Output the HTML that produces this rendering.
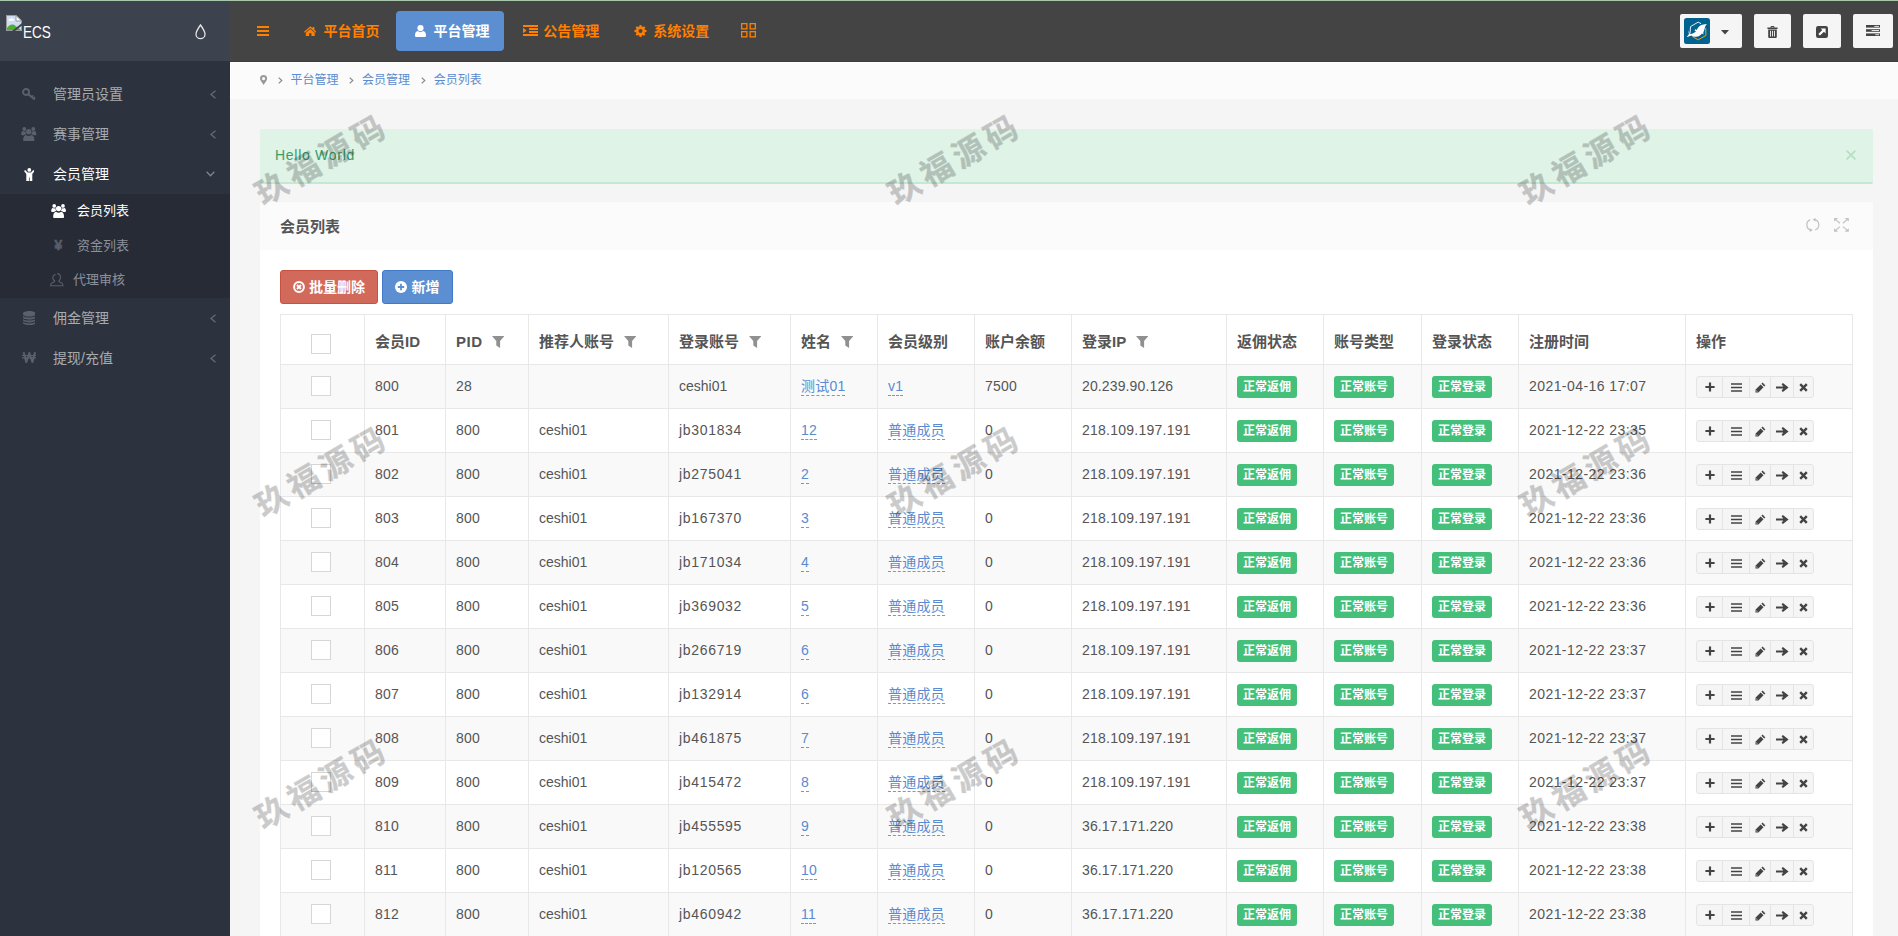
<!DOCTYPE html>
<html lang="zh-CN">
<head>
<meta charset="utf-8">
<title>会员列表</title>
<style>
*{box-sizing:border-box}
html,body{margin:0;padding:0}
body{width:1898px;height:936px;overflow:hidden;position:relative;background:#f5f5f5;color:#555;
 font-family:"Liberation Sans","Noto Sans CJK SC",sans-serif;font-size:14px;line-height:20px}
a{text-decoration:none;color:inherit}
.abs{position:absolute}
#topline{left:0;top:0;width:1898px;height:1px;background:#a9c7ab;z-index:50}
/* sidebar */
#sidebar{left:0;top:0;width:230px;height:936px;background:#2d333e}
#brand{left:0;top:0;width:230px;height:61px;background:#3d434e}
#brand .alt{left:23px;top:22px;color:#fff;font-size:16.5px;line-height:20px;transform:scaleX(.82);transform-origin:left center}
.mi{left:0;width:230px;height:40px;color:#a7abb0;font-size:14px}
.mi .t{position:absolute;left:53px;top:10px;line-height:20px;white-space:nowrap}
.mi svg.ic{position:absolute}
.mi svg.ar{position:absolute;right:15px;top:15px}
.mi.open{color:#fff}
#sub{left:0;top:194px;width:230px;height:104px;background:#262b36}
.si{left:0;width:230px;height:34px;color:#8b919a;font-size:13px}
.si .t{position:absolute;top:7px;line-height:20px;white-space:nowrap}
.si.on{color:#fff}
/* navbar */
#nav{left:230px;top:0;width:1668px;height:62px;background:#444;border-bottom:1px solid #3b3b3b}
.tab{top:11px;height:40px;color:#ff8000;font-weight:bold;font-size:14px;line-height:20px;white-space:nowrap}
.tab .t{position:absolute;top:10px}
.tab.act{background:#5b8fd2;color:#fff;border-radius:4px}
.rbtn{top:14px;height:34px;background:#f5f5f5;border-radius:2px}
/* breadcrumb */
#crumb{left:230px;top:62px;width:1668px;height:37px;background:#fbfbfb;border-top:1px solid #fff;border-left:1px solid #fff;font-size:12px;color:#5a8bd0}
#crumb span{position:absolute;top:7px;line-height:20px;white-space:nowrap}
/* alert */
#alert{left:260px;top:129px;width:1613px;height:55px;background:#dff3e7;border-bottom:2px solid #c4e8d2;border-radius:2px;color:#3a9d68;font-size:14px}
#alert .t{position:absolute;left:15px;top:16px;line-height:20px;letter-spacing:.72px}
/* panel */
#panel{left:260px;top:202px;width:1613px;height:740px;background:#fff}
#phead{left:0;top:0;width:1613px;height:48px;background:#fbfbfb;color:#555;font-weight:bold;font-size:15px}
#phead .t{position:absolute;left:20px;top:15px;line-height:20px}
.btn{top:68px;height:34px;border-radius:3px;color:#fff;font-weight:bold;font-size:14px;line-height:20px;border:1px solid}
.btn .t{position:absolute;top:6px;white-space:nowrap}
/* table */
table{position:absolute;left:280px;top:314px;width:1573px;border-collapse:collapse;table-layout:fixed;font-size:14px;color:#555}
th,td{border:1px solid #e8e8e8;padding:0 0 0 10px;text-align:left;vertical-align:middle;white-space:nowrap;overflow:hidden}
th{height:50px;font-weight:bold;font-size:15px;color:#555;background:#fff}
th .ht{position:relative;top:2px}
th .flt{position:relative;top:2.5px;margin-left:9.5px}
th .lat{letter-spacing:.5px}
td{height:44px;padding-bottom:1px}
td.n,a.n{letter-spacing:.2px}
td.jb{letter-spacing:.68px}
td.ip{letter-spacing:.25px}
td.ip2{letter-spacing:.13px}
td.dt{letter-spacing:.43px}
tbody tr:nth-child(odd) td{background:#f9f9f9}
tbody tr:nth-child(even) td{background:#fff}
.cb{display:block;width:20px;height:20px;border:1px solid #d6d6d6;background:#fff;margin-left:20px}
th .cb{position:relative;top:4.5px}
td.c0,th.c0{padding-left:10px}
a.ed{color:#5a8bd0;border-bottom:1px dashed #6c9ad8;padding-bottom:1px}
.lb{display:inline-block;height:22px;line-height:22px;padding:0 6px;background:#44c07b;color:#fff;font-weight:bold;font-size:12px;border-radius:3px;vertical-align:middle;position:relative;top:1px}
.ops{display:inline-block;vertical-align:middle;height:22px;border:1px solid #e4e4e4;border-radius:3px;background:#f5f5f5;font-size:0;position:relative;top:1px}
.ops i{display:inline-block;height:20px;border-right:1px solid #e4e4e4;vertical-align:top;position:relative}
.ops i:last-child{border-right:0}
.ops svg{position:absolute;left:50%;top:50%}
.flt{display:inline-block;vertical-align:-1px;margin-left:9px}
.wm{position:absolute;font-size:32px;line-height:30px;color:#000;-webkit-text-stroke:.3px #000;opacity:.2;font-weight:bold;white-space:nowrap;transform:rotate(-30deg);transform-origin:left bottom;letter-spacing:5px;z-index:40;font-family:"Noto Sans CJK SC","Liberation Sans",sans-serif}
</style>
</head>
<body>
<div id="sidebar" class="abs">
<div id="brand" class="abs">
<svg style="position:absolute;left:6px;top:15px" width="16" height="16" viewBox="0 0 16 16"><rect x="0.5" y="0.5" width="15" height="15" fill="#cfdcf3" stroke="#9a9a9a"/><path d="M10 0 H16 V6 Z" fill="#3e444f"/><path d="M10 0.5 V6 H15.5 Z" fill="#fff" stroke="#9a9a9a" stroke-width="1"/><path d="M1 15 V13 C3 9.5 7 8.5 9.5 11 L15 15 Z" fill="#4caf35"/><path d="M2.5 5.2 C2.5 4 4 3.4 4.8 4.2 C5.2 3 7 3 7.3 4.3 C8.3 4.2 8.6 5.3 8 5.8 H2.9 Z" fill="#fff"/><path d="M6 16 L16 8 V10.5 L9 16 Z" fill="#3e444f"/></svg>
<span class="abs alt">ECS</span>
<svg style="position:absolute;left:194.7px;top:24px" width="11" height="16" viewBox="0 0 11 16"><path d="M5.5 1 C5.5 1 1 7.2 1 10.2 A4.5 4.5 0 0 0 10 10.2 C10 7.2 5.5 1 5.5 1 Z" fill="none" stroke="#e6e6e6" stroke-width="1.3"/></svg>
</div>
<div class="mi abs" style="top:74px"><svg style="position:absolute;left:21.5px;top:14.2px" width="14" height="13" viewBox="0 0 14 13"><g fill="none" stroke="#5a616d"><circle cx="4" cy="4" r="3" stroke-width="1.9"/><path d="M6.2 6.1 L12.8 11.5" stroke-width="2.1"/><path d="M9.9 9 L11.2 7.4 M11.7 10.5 L13 8.9" stroke-width="1.4"/></g></svg><span class="t">管理员设置</span><svg style="position:absolute;left:209.5px;top:16px" width="7" height="9" viewBox="0 0 7 9"><path d="M5.5 0.7 L1 4.5 L5.5 8.3" fill="none" stroke="#636a76" stroke-width="1.3"/></svg></div>
<div class="mi abs" style="top:114px"><svg style="position:absolute;left:21.2px;top:12.9px" width="15.6" height="14.4" viewBox="0 0 15.6 14.4"><g fill="#5a616d"><circle cx="7.8" cy="4.7" r="2.7"/><path d="M3.4 14.3 C2.6 14.3 2.2 13.8 2.2 13 C2.2 10.2 3.3 8.1 5.2 8 C5.9 8.7 6.8 9.1 7.8 9.1 C8.8 9.1 9.7 8.7 10.4 8 C12.3 8.1 13.4 10.2 13.4 13 C13.4 13.8 13 14.3 12.2 14.3 Z"/><circle cx="3.3" cy="2" r="1.9"/><circle cx="12.3" cy="2" r="1.9"/><path d="M0.2 7.3 C0.2 5.6 0.8 4.2 1.9 4.1 C2.3 4.4 2.8 4.6 3.3 4.6 C3.8 4.6 4.2 4.5 4.6 4.2 C4.5 5.6 5 6.7 5.5 7.2 C4.4 7.3 3.6 7.7 3.1 8.2 H1.2 C0.5 8.2 0.2 7.9 0.2 7.3 Z"/><path d="M0.2 7.3 C0.2 5.6 0.8 4.2 1.9 4.1 C2.3 4.4 2.8 4.6 3.3 4.6 C3.8 4.6 4.2 4.5 4.6 4.2 C4.5 5.6 5 6.7 5.5 7.2 C4.4 7.3 3.6 7.7 3.1 8.2 H1.2 C0.5 8.2 0.2 7.9 0.2 7.3 Z" transform="translate(15.6,0) scale(-1,1)"/></g></svg><span class="t">赛事管理</span><svg style="position:absolute;left:209.5px;top:16px" width="7" height="9" viewBox="0 0 7 9"><path d="M5.5 0.7 L1 4.5 L5.5 8.3" fill="none" stroke="#636a76" stroke-width="1.3"/></svg></div>
<div class="mi abs open" style="top:154px"><svg style="position:absolute;left:23.8px;top:13.7px" width="10.6" height="13.6" viewBox="0 0 10.6 13.6"><g fill="#fff"><circle cx="5.3" cy="1.9" r="1.9"/><path d="M0 3.1 L1.2 1.9 L3.7 4.5 H6.9 L9.4 1.9 L10.6 3.1 L8.3 6.1 V13.6 H5.65 V9.6 H4.95 V13.6 H2.3 V6.1 Z"/></g></svg><span class="t">会员管理</span><svg style="position:absolute;left:206px;top:17px" width="9" height="6" viewBox="0 0 9 6"><path d="M0.7 0.7 L4.5 4.7 L8.3 0.7" fill="none" stroke="#7d8490" stroke-width="1.3"/></svg></div>
<div id="sub" class="abs">
<div class="si abs on" style="top:0"><svg style="position:absolute;left:51px;top:10px" width="15.2" height="14" viewBox="0 0 15.6 14.4"><g fill="#fff"><circle cx="7.8" cy="4.7" r="2.7"/><path d="M3.4 14.3 C2.6 14.3 2.2 13.8 2.2 13 C2.2 10.2 3.3 8.1 5.2 8 C5.9 8.7 6.8 9.1 7.8 9.1 C8.8 9.1 9.7 8.7 10.4 8 C12.3 8.1 13.4 10.2 13.4 13 C13.4 13.8 13 14.3 12.2 14.3 Z"/><circle cx="3.3" cy="2" r="1.9"/><circle cx="12.3" cy="2" r="1.9"/><path d="M0.2 7.3 C0.2 5.6 0.8 4.2 1.9 4.1 C2.3 4.4 2.8 4.6 3.3 4.6 C3.8 4.6 4.2 4.5 4.6 4.2 C4.5 5.6 5 6.7 5.5 7.2 C4.4 7.3 3.6 7.7 3.1 8.2 H1.2 C0.5 8.2 0.2 7.9 0.2 7.3 Z"/><path d="M0.2 7.3 C0.2 5.6 0.8 4.2 1.9 4.1 C2.3 4.4 2.8 4.6 3.3 4.6 C3.8 4.6 4.2 4.5 4.6 4.2 C4.5 5.6 5 6.7 5.5 7.2 C4.4 7.3 3.6 7.7 3.1 8.2 H1.2 C0.5 8.2 0.2 7.9 0.2 7.3 Z" transform="translate(15.6,0) scale(-1,1)"/></g></svg><span class="t" style="left:77px">会员列表</span></div>
<div class="si abs" style="top:35px"><span class="abs" style="left:54.3px;top:6px;color:#575e6a;font-weight:bold;font-size:14.5px;line-height:20px;-webkit-text-stroke:.5px #575e6a">¥</span><span class="t" style="left:77px">资金列表</span></div>
<div class="si abs" style="top:69px"><svg style="position:absolute;left:50px;top:9.5px" width="14" height="14" viewBox="0 0 14 14"><g fill="none" stroke="#575e6a" stroke-width="1.1"><path d="M7.2 0.6 C9.2 0.6 10.4 2 10.4 4.2 C10.4 5.8 9.8 7.2 9 7.8 V8.7 L11.8 10 C12.8 10.5 13 11.4 13 12.8 H0.6 C0.6 11.4 .8 10.5 1.8 10 L4.6 8.7 V7.8"/><path d="M4.9 8 C3.4 7.2 2.6 5.6 2.9 3.8 C3.2 2.2 4.4 1.5 5.6 1.6"/></g></svg><span class="t" style="left:73px">代理审核</span></div>
</div>
<div class="mi abs" style="top:298px"><svg style="position:absolute;left:22.8px;top:12.8px" width="12.6" height="14.2" viewBox="0 0 12.6 14.2"><g fill="#5a616d"><path d="M0 2.4 C0 1.1 2.8 0 6.3 0 C9.8 0 12.6 1.1 12.6 2.4 V3.2 C12.6 4.5 9.8 5.6 6.3 5.6 C2.8 5.6 0 4.5 0 3.2 Z"/><path d="M0 5 C1 6.1 3.5 6.6 6.3 6.6 C9.1 6.6 11.6 6.1 12.6 5 V6.2 C12.6 7.5 9.8 8.5 6.3 8.5 C2.8 8.5 0 7.5 0 6.2 Z"/><path d="M0 7.9 C1 9 3.5 9.5 6.3 9.5 C9.1 9.5 11.6 9 12.6 7.9 V9.1 C12.6 10.4 9.8 11.4 6.3 11.4 C2.8 11.4 0 10.4 0 9.1 Z"/><path d="M0 10.8 C1 11.9 3.5 12.4 6.3 12.4 C9.1 12.4 11.6 11.9 12.6 10.8 V11.8 C12.6 13.1 9.8 14.2 6.3 14.2 C2.8 14.2 0 13.1 0 11.8 Z"/></g></svg><span class="t">佣金管理</span><svg style="position:absolute;left:209.5px;top:16px" width="7" height="9" viewBox="0 0 7 9"><path d="M5.5 0.7 L1 4.5 L5.5 8.3" fill="none" stroke="#636a76" stroke-width="1.3"/></svg></div>
<div class="mi abs" style="top:338px"><svg style="position:absolute;left:21.8px;top:14px" width="14.7" height="11" viewBox="0 0 14.7 11"><g fill="none" stroke="#5a616d"><path d="M1.6 0.2 L4.3 10 L7.35 1.2 L10.4 10 L13.1 0.2" stroke-width="2" stroke-linejoin="miter"/><path d="M0 3.5 H14.7 M0 5.9 H14.7" stroke-width="1.1"/></g></svg><span class="t">提现/充值</span><svg style="position:absolute;left:209.5px;top:16px" width="7" height="9" viewBox="0 0 7 9"><path d="M5.5 0.7 L1 4.5 L5.5 8.3" fill="none" stroke="#636a76" stroke-width="1.3"/></svg></div>
</div>
<div id="nav" class="abs">
<svg style="position:absolute;left:27px;top:26px" width="12" height="10" viewBox="0 0 12 10"><path d="M0 1 H12 M0 5 H12 M0 9 H12" stroke="#ff8000" stroke-width="2"/></svg>
<div class="tab abs" style="left:60px;width:104px"><svg style="position:absolute;left:13.5px;top:14.6px" width="12.6" height="10.6" viewBox="0 0 13 10.6"><path fill="#ff8000" d="M6.5 0 L8.9 2.1 V0.8 H10.7 V3.7 L13 5.7 L12.1 6.8 L6.5 1.9 L0.9 6.8 L0 5.7 Z M6.5 2.8 L11.1 6.8 V10.6 H7.7 V7.4 H5.3 V10.6 H1.9 V6.8 Z"/></svg><span class="t" style="left:33.5px">平台首页</span></div>
<div class="tab abs act" style="left:166px;width:108px"><svg style="position:absolute;left:19px;top:14px" width="11" height="12" viewBox="0 0 11 12"><g fill="#fff"><circle cx="5.5" cy="3.1" r="3.1"/><path d="M1.6 12 C0.5 12 0 11.4 0 10.4 C0 8 1 6.2 2.9 6.1 C3.6 6.8 4.5 7.2 5.5 7.2 C6.5 7.2 7.4 6.8 8.1 6.1 C10 6.2 11 8 11 10.4 C11 11.4 10.5 12 9.4 12 Z"/></g></svg><span class="t" style="left:37.5px">平台管理</span></div>
<div class="tab abs" style="left:280px;width:104px"><svg style="position:absolute;left:13px;top:14px" width="15" height="11" viewBox="0 0 15 11"><g fill="#ff8000"><rect x="0" y="0" width="15" height="2"/><rect x="0" y="9" width="15" height="2"/><rect x="6" y="3" width="9" height="2"/><rect x="6" y="6" width="9" height="2"/><path d="M0 2.8 L3.6 5.5 L0 8.2 Z"/></g></svg><span class="t" style="left:33.3px">公告管理</span></div>
<div class="tab abs" style="left:391px;width:104px"><svg style="position:absolute;left:13px;top:14px" width="13" height="12" viewBox="0.7 0 13.6 13.6"><g fill="#ff8000"><path d="M6.5 0 H8.5 L8.9 1.8 L10 2.3 L11.6 1.3 L13 2.7 L12 4.3 L12.5 5.4 L14.3 5.8 V7.8 L12.5 8.2 L12 9.3 L13 10.9 L11.6 12.3 L10 11.3 L8.9 11.8 L8.5 13.6 H6.5 L6.1 11.8 L5 11.3 L3.4 12.3 L2 10.9 L3 9.3 L2.5 8.2 L0.7 7.8 V5.8 L2.5 5.4 L3 4.3 L2 2.7 L3.4 1.3 L5 2.3 L6.1 1.8 Z M7.5 4.5 A2.3 2.3 0 1 0 7.5 9.1 A2.3 2.3 0 1 0 7.5 4.5 Z" fill-rule="evenodd"/></g></svg><span class="t" style="left:32.3px">系统设置</span></div>
<svg style="position:absolute;left:510.8px;top:23px" width="15" height="14.5" viewBox="0 0 15 14.5"><g fill="none" stroke="#ff8000" stroke-width="1.3"><rect x="0.65" y="0.65" width="5.2" height="5.2"/><rect x="9.15" y="0.65" width="5.2" height="5.2"/><rect x="0.65" y="8.65" width="5.2" height="5.2"/><rect x="9.15" y="8.65" width="5.2" height="5.2"/></g></svg>
<div class="rbtn abs" style="left:1450px;width:62px">
<svg style="position:absolute;left:4px;top:4px" width="26" height="26" viewBox="0 0 26 26"><rect width="26" height="26" rx="2.5" fill="#02628f"/><path d="M17.2 5.8 L14.2 4.1 L6.5 8.6 L6.1 15.1" fill="none" stroke="#fff" stroke-width="0.9"/><path d="M21.7 10 L21.9 17.5 L14.2 21.8 L8.6 18.7" fill="none" stroke="#e3a620" stroke-width="1"/><path d="M22.9 6 C20.5 6.2 18 6.6 16.4 7.6 C14.6 8.8 13.6 10.4 12.7 11.9 L11.2 11.3 L10.5 12.5 L12 13.3 C10.6 14.8 9 15.8 7.3 15.9 C6.6 15.9 6 15.7 5.7 15.4 L4.1 12.3 L5 16 L2.6 19.2 L7.3 17.4 C9 18.6 10.6 19 12.2 18.8 C14 18.6 15.6 18 16.8 16.8 L18 15.6 L19.4 16.4 L19.3 14.6 C20 13.2 20.4 11.6 20.8 10 C21.2 8.4 21.8 7.2 22.9 6 Z" fill="#fff"/></svg>
<svg style="position:absolute;left:41px;top:16px" width="8" height="5" viewBox="0 0 8 5"><path d="M0 0 H8 L4 4.6 Z" fill="#444"/></svg>
</div>
<div class="rbtn abs" style="left:1524px;width:37px"><svg style="position:absolute;left:13px;top:11.5px" width="11" height="12.2" viewBox="0 0 11 12.2"><g fill="#444"><path d="M3.6 0.9 C3.6 0.3 4 0 4.5 0 H6.5 C7 0 7.4 0.3 7.4 0.9 V1.6 H10.6 V2.9 H0.4 V1.6 H3.6 Z M4.5 0.9 V1.6 H6.5 V0.9 Z" fill-rule="evenodd"/><path d="M1.2 3.6 H9.8 V10.8 C9.8 11.6 9.3 12.2 8.5 12.2 H2.5 C1.7 12.2 1.2 11.6 1.2 10.8 Z M3 4.8 V10.6 H3.9 V4.8 Z M5.05 4.8 V10.6 H5.95 V4.8 Z M7.1 4.8 V10.6 H8 V4.8 Z" fill-rule="evenodd"/></g></svg></div>
<div class="rbtn abs" style="left:1573px;width:38px"><svg style="position:absolute;left:13px;top:12px" width="12" height="12" viewBox="0 0 12 12"><rect x="0" y="0" width="12" height="12" rx="2.2" fill="#444"/><path d="M4.6 2.4 H9.6 V7.4 L7.9 5.7 L4 9.6 L2.4 8 L6.3 4.1 Z" fill="#fff"/></svg></div>
<div class="rbtn abs" style="left:1623px;width:40px"><svg style="position:absolute;left:13px;top:11px" width="14" height="11" viewBox="0 0 14 11"><g fill="#444"><rect x="0" y="0" width="14" height="2.6"/><rect x="0" y="4.2" width="14" height="2.6"/><rect x="0" y="8.4" width="14" height="2.6"/></g><g fill="#f5f5f5"><rect x="8.4" y="0.9" width="4.6" height="0.9"/><rect x="5.6" y="5.1" width="7.4" height="0.9"/><rect x="9.4" y="9.3" width="3.6" height="0.9"/></g></svg></div>
</div>
<div id="crumb" class="abs">
<svg style="position:absolute;left:28.8px;top:12px" width="7.2" height="10" viewBox="0 0 7.2 10"><path d="M3.6 0 A3.6 3.6 0 0 1 7.2 3.6 C7.2 5.4 5 8 3.6 10 C2.2 8 0 5.4 0 3.6 A3.6 3.6 0 0 1 3.6 0 Z M3.6 2 A1.6 1.6 0 1 0 3.6 5.2 A1.6 1.6 0 1 0 3.6 2 Z" fill="#999" fill-rule="evenodd"/></svg>
<svg style="position:absolute;left:46.5px;top:14px" width="5" height="7" viewBox="0 0 5 7"><path d="M0.7 0.6 L3.8 3.5 L0.7 6.4" fill="none" stroke="#8a8a8a" stroke-width="1.2"/></svg>
<svg style="position:absolute;left:118px;top:14px" width="5" height="7" viewBox="0 0 5 7"><path d="M0.7 0.6 L3.8 3.5 L0.7 6.4" fill="none" stroke="#8a8a8a" stroke-width="1.2"/></svg>
<svg style="position:absolute;left:189.8px;top:14px" width="5" height="7" viewBox="0 0 5 7"><path d="M0.7 0.6 L3.8 3.5 L0.7 6.4" fill="none" stroke="#8a8a8a" stroke-width="1.2"/></svg>
<span style="left:59.5px">平台管理</span><span style="left:131px">会员管理</span><span style="left:202.7px">会员列表</span>
</div>
<div id="alert" class="abs"><span class="t">Hello World</span>
<svg style="position:absolute;left:1586px;top:20.5px" width="10" height="10" viewBox="0 0 10 10"><path d="M0.6 0.6 L9.4 9.4 M9.4 0.6 L0.6 9.4" stroke="#b2e1c6" stroke-width="1.7"/></svg>
</div>
<div id="panel" class="abs"><div id="phead" class="abs"><span class="t">会员列表</span>
<svg style="position:absolute;left:1546.3px;top:15.8px;overflow:visible" width="13.4" height="14" viewBox="0 -0.2 13.4 14"><g fill="none" stroke="#c2c2c2" stroke-width="1.25"><path d="M4.1 1.4 A5.7 5.7 0 0 0 5.3 12.1"/><path d="M9.2 11.7 A5.25 5.25 0 0 0 8.2 1.5"/></g><g fill="#c2c2c2"><path d="M3.7 10.1 L6.9 11.9 L3.8 13.7 Z"/><path d="M9.7 -0.2 L6.5 1.4 L9.6 3.3 Z"/></g></svg>
<svg style="position:absolute;left:1573.9px;top:16px" width="14.8" height="13.8" viewBox="0 0 14.8 13.8"><g fill="#c2c2c2"><path d="M0 0 H4.2 L0 3.6 Z"/><path d="M14.8 0 V3.6 L10.6 0 Z"/><path d="M0 13.8 V10.2 L4.2 13.8 Z"/><path d="M14.8 13.8 H10.6 L14.8 10.2 Z"/></g><g fill="none" stroke="#c2c2c2" stroke-width="1.2"><path d="M1.5 1.4 L5.9 5.2 M13.3 1.4 L8.9 5.2 M1.5 12.4 L5.9 8.6 M13.3 12.4 L8.9 8.6"/></g></svg>
</div>
<div class="btn abs" style="left:20px;width:98px;background:#d26a5c;border-color:#c9513f"><svg style="position:absolute;left:12px;top:10px" width="12" height="12" viewBox="0 0 12 12"><circle cx="6" cy="6" r="4.9" fill="none" stroke="#fff" stroke-width="2"/><path d="M4 4 L8 8 M8 4 L4 8" stroke="#fff" stroke-width="2"/></svg><span class="t" style="left:28px">批量删除</span></div>
<div class="btn abs" style="left:122px;width:71px;background:#5b8fd2;border-color:#3f79c8"><svg style="position:absolute;left:12px;top:10px" width="12" height="12" viewBox="0 0 12 12"><circle cx="6" cy="6" r="6" fill="#fff"/><path d="M6 2.8 V9.2 M2.8 6 H9.2" stroke="#5b8fd2" stroke-width="1.8"/></svg><span class="t" style="left:28.5px">新增</span></div>
</div>
<table><colgroup><col style="width:84px"><col style="width:81px"><col style="width:83px"><col style="width:140px"><col style="width:122px"><col style="width:87px"><col style="width:97px"><col style="width:97px"><col style="width:155px"><col style="width:97px"><col style="width:98px"><col style="width:97px"><col style="width:167px"><col style="width:167px"></colgroup><thead><tr>
<th class="c0"><span class="cb"></span></th>
<th><span class="ht">会员ID</span></th>
<th><span class="ht lat">PID</span><svg class="flt" width="12.4" height="12" viewBox="0 0 12.4 12"><path d="M0 0 H12.4 L8.1 4.9 V12 L4.3 9.4 V4.9 Z" fill="#909090"/></svg></th>
<th><span class="ht">推荐人账号</span><svg class="flt" width="12.4" height="12" viewBox="0 0 12.4 12"><path d="M0 0 H12.4 L8.1 4.9 V12 L4.3 9.4 V4.9 Z" fill="#909090"/></svg></th>
<th><span class="ht">登录账号</span><svg class="flt" width="12.4" height="12" viewBox="0 0 12.4 12"><path d="M0 0 H12.4 L8.1 4.9 V12 L4.3 9.4 V4.9 Z" fill="#909090"/></svg></th>
<th><span class="ht">姓名</span><svg class="flt" width="12.4" height="12" viewBox="0 0 12.4 12"><path d="M0 0 H12.4 L8.1 4.9 V12 L4.3 9.4 V4.9 Z" fill="#909090"/></svg></th>
<th><span class="ht">会员级别</span></th>
<th><span class="ht">账户余额</span></th>
<th><span class="ht">登录IP</span><svg class="flt" width="12.4" height="12" viewBox="0 0 12.4 12"><path d="M0 0 H12.4 L8.1 4.9 V12 L4.3 9.4 V4.9 Z" fill="#909090"/></svg></th>
<th><span class="ht">返佣状态</span></th>
<th><span class="ht">账号类型</span></th>
<th><span class="ht">登录状态</span></th>
<th><span class="ht">注册时间</span></th>
<th><span class="ht">操作</span></th>
</tr></thead><tbody>
<tr><td class="c0"><span class="cb"></span></td><td class="n">800</td><td class="n">28</td><td class="a1"></td><td class="a2">ceshi01</td><td><a class="ed n">测试01</a></td><td><a class="ed n">v1</a></td><td class="n">7500</td><td class="ip2">20.239.90.126</td><td><span class="lb">正常返佣</span></td><td><span class="lb">正常账号</span></td><td><span class="lb">正常登录</span></td><td class="dt">2021-04-16 17:07</td><td><span class="ops"><i style="width:26px"><svg style="margin-left:-5.0px;margin-top:-5.0px" width="10" height="10" viewBox="0 0 10 10"><path d="M5 0.4 V9.6 M0.4 5 H9.6" stroke="#444" stroke-width="2.2"/></svg></i><i style="width:27px"><svg style="margin-left:-5.5px;margin-top:-4.0px" width="11" height="9" viewBox="0 0 11 9"><path d="M0 1 H11 M0 4.5 H11 M0 8 H11" stroke="#444" stroke-width="1.7"/></svg></i><i style="width:21px"><svg style="margin-left:-5.5px;margin-top:-5.0px" width="11" height="11" viewBox="0 0 11 11"><path d="M7.6 0.6 L10.4 3.4 L9.2 4.6 L6.4 1.8 Z M5.7 2.5 L8.5 5.3 L3.4 10.4 L0.4 10.6 L0.6 7.6 Z M1.5 8.2 L1.4 9.6 L2.8 9.5 Z" fill="#444" fill-rule="evenodd"/></svg></i><i style="width:23px"><svg style="margin-left:-6.5px;margin-top:-4.5px" width="13" height="9" viewBox="0 0 13 9"><path d="M0 3.4 H7.2 L5.6 1.2 L6.9 0 L12.6 4.5 L6.9 9 L5.6 7.8 L7.2 5.6 H0 Z" fill="#444"/></svg></i><i style="width:19px"><svg style="margin-left:-4.5px;margin-top:-4.0px" width="9" height="9" viewBox="0 0 9 9"><path d="M1.2 1.2 L7.8 7.8 M7.8 1.2 L1.2 7.8" stroke="#444" stroke-width="2.4"/></svg></i></span></td></tr>
<tr><td class="c0"><span class="cb"></span></td><td class="n">801</td><td class="n">800</td><td class="a1">ceshi01</td><td class="jb">jb301834</td><td><a class="ed n">12</a></td><td><a class="ed n">普通成员</a></td><td class="n">0</td><td class="ip">218.109.197.191</td><td><span class="lb">正常返佣</span></td><td><span class="lb">正常账号</span></td><td><span class="lb">正常登录</span></td><td class="dt">2021-12-22 23:35</td><td><span class="ops"><i style="width:26px"><svg style="margin-left:-5.0px;margin-top:-5.0px" width="10" height="10" viewBox="0 0 10 10"><path d="M5 0.4 V9.6 M0.4 5 H9.6" stroke="#444" stroke-width="2.2"/></svg></i><i style="width:27px"><svg style="margin-left:-5.5px;margin-top:-4.0px" width="11" height="9" viewBox="0 0 11 9"><path d="M0 1 H11 M0 4.5 H11 M0 8 H11" stroke="#444" stroke-width="1.7"/></svg></i><i style="width:21px"><svg style="margin-left:-5.5px;margin-top:-5.0px" width="11" height="11" viewBox="0 0 11 11"><path d="M7.6 0.6 L10.4 3.4 L9.2 4.6 L6.4 1.8 Z M5.7 2.5 L8.5 5.3 L3.4 10.4 L0.4 10.6 L0.6 7.6 Z M1.5 8.2 L1.4 9.6 L2.8 9.5 Z" fill="#444" fill-rule="evenodd"/></svg></i><i style="width:23px"><svg style="margin-left:-6.5px;margin-top:-4.5px" width="13" height="9" viewBox="0 0 13 9"><path d="M0 3.4 H7.2 L5.6 1.2 L6.9 0 L12.6 4.5 L6.9 9 L5.6 7.8 L7.2 5.6 H0 Z" fill="#444"/></svg></i><i style="width:19px"><svg style="margin-left:-4.5px;margin-top:-4.0px" width="9" height="9" viewBox="0 0 9 9"><path d="M1.2 1.2 L7.8 7.8 M7.8 1.2 L1.2 7.8" stroke="#444" stroke-width="2.4"/></svg></i></span></td></tr>
<tr><td class="c0"><span class="cb"></span></td><td class="n">802</td><td class="n">800</td><td class="a1">ceshi01</td><td class="jb">jb275041</td><td><a class="ed n">2</a></td><td><a class="ed n">普通成员</a></td><td class="n">0</td><td class="ip">218.109.197.191</td><td><span class="lb">正常返佣</span></td><td><span class="lb">正常账号</span></td><td><span class="lb">正常登录</span></td><td class="dt">2021-12-22 23:36</td><td><span class="ops"><i style="width:26px"><svg style="margin-left:-5.0px;margin-top:-5.0px" width="10" height="10" viewBox="0 0 10 10"><path d="M5 0.4 V9.6 M0.4 5 H9.6" stroke="#444" stroke-width="2.2"/></svg></i><i style="width:27px"><svg style="margin-left:-5.5px;margin-top:-4.0px" width="11" height="9" viewBox="0 0 11 9"><path d="M0 1 H11 M0 4.5 H11 M0 8 H11" stroke="#444" stroke-width="1.7"/></svg></i><i style="width:21px"><svg style="margin-left:-5.5px;margin-top:-5.0px" width="11" height="11" viewBox="0 0 11 11"><path d="M7.6 0.6 L10.4 3.4 L9.2 4.6 L6.4 1.8 Z M5.7 2.5 L8.5 5.3 L3.4 10.4 L0.4 10.6 L0.6 7.6 Z M1.5 8.2 L1.4 9.6 L2.8 9.5 Z" fill="#444" fill-rule="evenodd"/></svg></i><i style="width:23px"><svg style="margin-left:-6.5px;margin-top:-4.5px" width="13" height="9" viewBox="0 0 13 9"><path d="M0 3.4 H7.2 L5.6 1.2 L6.9 0 L12.6 4.5 L6.9 9 L5.6 7.8 L7.2 5.6 H0 Z" fill="#444"/></svg></i><i style="width:19px"><svg style="margin-left:-4.5px;margin-top:-4.0px" width="9" height="9" viewBox="0 0 9 9"><path d="M1.2 1.2 L7.8 7.8 M7.8 1.2 L1.2 7.8" stroke="#444" stroke-width="2.4"/></svg></i></span></td></tr>
<tr><td class="c0"><span class="cb"></span></td><td class="n">803</td><td class="n">800</td><td class="a1">ceshi01</td><td class="jb">jb167370</td><td><a class="ed n">3</a></td><td><a class="ed n">普通成员</a></td><td class="n">0</td><td class="ip">218.109.197.191</td><td><span class="lb">正常返佣</span></td><td><span class="lb">正常账号</span></td><td><span class="lb">正常登录</span></td><td class="dt">2021-12-22 23:36</td><td><span class="ops"><i style="width:26px"><svg style="margin-left:-5.0px;margin-top:-5.0px" width="10" height="10" viewBox="0 0 10 10"><path d="M5 0.4 V9.6 M0.4 5 H9.6" stroke="#444" stroke-width="2.2"/></svg></i><i style="width:27px"><svg style="margin-left:-5.5px;margin-top:-4.0px" width="11" height="9" viewBox="0 0 11 9"><path d="M0 1 H11 M0 4.5 H11 M0 8 H11" stroke="#444" stroke-width="1.7"/></svg></i><i style="width:21px"><svg style="margin-left:-5.5px;margin-top:-5.0px" width="11" height="11" viewBox="0 0 11 11"><path d="M7.6 0.6 L10.4 3.4 L9.2 4.6 L6.4 1.8 Z M5.7 2.5 L8.5 5.3 L3.4 10.4 L0.4 10.6 L0.6 7.6 Z M1.5 8.2 L1.4 9.6 L2.8 9.5 Z" fill="#444" fill-rule="evenodd"/></svg></i><i style="width:23px"><svg style="margin-left:-6.5px;margin-top:-4.5px" width="13" height="9" viewBox="0 0 13 9"><path d="M0 3.4 H7.2 L5.6 1.2 L6.9 0 L12.6 4.5 L6.9 9 L5.6 7.8 L7.2 5.6 H0 Z" fill="#444"/></svg></i><i style="width:19px"><svg style="margin-left:-4.5px;margin-top:-4.0px" width="9" height="9" viewBox="0 0 9 9"><path d="M1.2 1.2 L7.8 7.8 M7.8 1.2 L1.2 7.8" stroke="#444" stroke-width="2.4"/></svg></i></span></td></tr>
<tr><td class="c0"><span class="cb"></span></td><td class="n">804</td><td class="n">800</td><td class="a1">ceshi01</td><td class="jb">jb171034</td><td><a class="ed n">4</a></td><td><a class="ed n">普通成员</a></td><td class="n">0</td><td class="ip">218.109.197.191</td><td><span class="lb">正常返佣</span></td><td><span class="lb">正常账号</span></td><td><span class="lb">正常登录</span></td><td class="dt">2021-12-22 23:36</td><td><span class="ops"><i style="width:26px"><svg style="margin-left:-5.0px;margin-top:-5.0px" width="10" height="10" viewBox="0 0 10 10"><path d="M5 0.4 V9.6 M0.4 5 H9.6" stroke="#444" stroke-width="2.2"/></svg></i><i style="width:27px"><svg style="margin-left:-5.5px;margin-top:-4.0px" width="11" height="9" viewBox="0 0 11 9"><path d="M0 1 H11 M0 4.5 H11 M0 8 H11" stroke="#444" stroke-width="1.7"/></svg></i><i style="width:21px"><svg style="margin-left:-5.5px;margin-top:-5.0px" width="11" height="11" viewBox="0 0 11 11"><path d="M7.6 0.6 L10.4 3.4 L9.2 4.6 L6.4 1.8 Z M5.7 2.5 L8.5 5.3 L3.4 10.4 L0.4 10.6 L0.6 7.6 Z M1.5 8.2 L1.4 9.6 L2.8 9.5 Z" fill="#444" fill-rule="evenodd"/></svg></i><i style="width:23px"><svg style="margin-left:-6.5px;margin-top:-4.5px" width="13" height="9" viewBox="0 0 13 9"><path d="M0 3.4 H7.2 L5.6 1.2 L6.9 0 L12.6 4.5 L6.9 9 L5.6 7.8 L7.2 5.6 H0 Z" fill="#444"/></svg></i><i style="width:19px"><svg style="margin-left:-4.5px;margin-top:-4.0px" width="9" height="9" viewBox="0 0 9 9"><path d="M1.2 1.2 L7.8 7.8 M7.8 1.2 L1.2 7.8" stroke="#444" stroke-width="2.4"/></svg></i></span></td></tr>
<tr><td class="c0"><span class="cb"></span></td><td class="n">805</td><td class="n">800</td><td class="a1">ceshi01</td><td class="jb">jb369032</td><td><a class="ed n">5</a></td><td><a class="ed n">普通成员</a></td><td class="n">0</td><td class="ip">218.109.197.191</td><td><span class="lb">正常返佣</span></td><td><span class="lb">正常账号</span></td><td><span class="lb">正常登录</span></td><td class="dt">2021-12-22 23:36</td><td><span class="ops"><i style="width:26px"><svg style="margin-left:-5.0px;margin-top:-5.0px" width="10" height="10" viewBox="0 0 10 10"><path d="M5 0.4 V9.6 M0.4 5 H9.6" stroke="#444" stroke-width="2.2"/></svg></i><i style="width:27px"><svg style="margin-left:-5.5px;margin-top:-4.0px" width="11" height="9" viewBox="0 0 11 9"><path d="M0 1 H11 M0 4.5 H11 M0 8 H11" stroke="#444" stroke-width="1.7"/></svg></i><i style="width:21px"><svg style="margin-left:-5.5px;margin-top:-5.0px" width="11" height="11" viewBox="0 0 11 11"><path d="M7.6 0.6 L10.4 3.4 L9.2 4.6 L6.4 1.8 Z M5.7 2.5 L8.5 5.3 L3.4 10.4 L0.4 10.6 L0.6 7.6 Z M1.5 8.2 L1.4 9.6 L2.8 9.5 Z" fill="#444" fill-rule="evenodd"/></svg></i><i style="width:23px"><svg style="margin-left:-6.5px;margin-top:-4.5px" width="13" height="9" viewBox="0 0 13 9"><path d="M0 3.4 H7.2 L5.6 1.2 L6.9 0 L12.6 4.5 L6.9 9 L5.6 7.8 L7.2 5.6 H0 Z" fill="#444"/></svg></i><i style="width:19px"><svg style="margin-left:-4.5px;margin-top:-4.0px" width="9" height="9" viewBox="0 0 9 9"><path d="M1.2 1.2 L7.8 7.8 M7.8 1.2 L1.2 7.8" stroke="#444" stroke-width="2.4"/></svg></i></span></td></tr>
<tr><td class="c0"><span class="cb"></span></td><td class="n">806</td><td class="n">800</td><td class="a1">ceshi01</td><td class="jb">jb266719</td><td><a class="ed n">6</a></td><td><a class="ed n">普通成员</a></td><td class="n">0</td><td class="ip">218.109.197.191</td><td><span class="lb">正常返佣</span></td><td><span class="lb">正常账号</span></td><td><span class="lb">正常登录</span></td><td class="dt">2021-12-22 23:37</td><td><span class="ops"><i style="width:26px"><svg style="margin-left:-5.0px;margin-top:-5.0px" width="10" height="10" viewBox="0 0 10 10"><path d="M5 0.4 V9.6 M0.4 5 H9.6" stroke="#444" stroke-width="2.2"/></svg></i><i style="width:27px"><svg style="margin-left:-5.5px;margin-top:-4.0px" width="11" height="9" viewBox="0 0 11 9"><path d="M0 1 H11 M0 4.5 H11 M0 8 H11" stroke="#444" stroke-width="1.7"/></svg></i><i style="width:21px"><svg style="margin-left:-5.5px;margin-top:-5.0px" width="11" height="11" viewBox="0 0 11 11"><path d="M7.6 0.6 L10.4 3.4 L9.2 4.6 L6.4 1.8 Z M5.7 2.5 L8.5 5.3 L3.4 10.4 L0.4 10.6 L0.6 7.6 Z M1.5 8.2 L1.4 9.6 L2.8 9.5 Z" fill="#444" fill-rule="evenodd"/></svg></i><i style="width:23px"><svg style="margin-left:-6.5px;margin-top:-4.5px" width="13" height="9" viewBox="0 0 13 9"><path d="M0 3.4 H7.2 L5.6 1.2 L6.9 0 L12.6 4.5 L6.9 9 L5.6 7.8 L7.2 5.6 H0 Z" fill="#444"/></svg></i><i style="width:19px"><svg style="margin-left:-4.5px;margin-top:-4.0px" width="9" height="9" viewBox="0 0 9 9"><path d="M1.2 1.2 L7.8 7.8 M7.8 1.2 L1.2 7.8" stroke="#444" stroke-width="2.4"/></svg></i></span></td></tr>
<tr><td class="c0"><span class="cb"></span></td><td class="n">807</td><td class="n">800</td><td class="a1">ceshi01</td><td class="jb">jb132914</td><td><a class="ed n">6</a></td><td><a class="ed n">普通成员</a></td><td class="n">0</td><td class="ip">218.109.197.191</td><td><span class="lb">正常返佣</span></td><td><span class="lb">正常账号</span></td><td><span class="lb">正常登录</span></td><td class="dt">2021-12-22 23:37</td><td><span class="ops"><i style="width:26px"><svg style="margin-left:-5.0px;margin-top:-5.0px" width="10" height="10" viewBox="0 0 10 10"><path d="M5 0.4 V9.6 M0.4 5 H9.6" stroke="#444" stroke-width="2.2"/></svg></i><i style="width:27px"><svg style="margin-left:-5.5px;margin-top:-4.0px" width="11" height="9" viewBox="0 0 11 9"><path d="M0 1 H11 M0 4.5 H11 M0 8 H11" stroke="#444" stroke-width="1.7"/></svg></i><i style="width:21px"><svg style="margin-left:-5.5px;margin-top:-5.0px" width="11" height="11" viewBox="0 0 11 11"><path d="M7.6 0.6 L10.4 3.4 L9.2 4.6 L6.4 1.8 Z M5.7 2.5 L8.5 5.3 L3.4 10.4 L0.4 10.6 L0.6 7.6 Z M1.5 8.2 L1.4 9.6 L2.8 9.5 Z" fill="#444" fill-rule="evenodd"/></svg></i><i style="width:23px"><svg style="margin-left:-6.5px;margin-top:-4.5px" width="13" height="9" viewBox="0 0 13 9"><path d="M0 3.4 H7.2 L5.6 1.2 L6.9 0 L12.6 4.5 L6.9 9 L5.6 7.8 L7.2 5.6 H0 Z" fill="#444"/></svg></i><i style="width:19px"><svg style="margin-left:-4.5px;margin-top:-4.0px" width="9" height="9" viewBox="0 0 9 9"><path d="M1.2 1.2 L7.8 7.8 M7.8 1.2 L1.2 7.8" stroke="#444" stroke-width="2.4"/></svg></i></span></td></tr>
<tr><td class="c0"><span class="cb"></span></td><td class="n">808</td><td class="n">800</td><td class="a1">ceshi01</td><td class="jb">jb461875</td><td><a class="ed n">7</a></td><td><a class="ed n">普通成员</a></td><td class="n">0</td><td class="ip">218.109.197.191</td><td><span class="lb">正常返佣</span></td><td><span class="lb">正常账号</span></td><td><span class="lb">正常登录</span></td><td class="dt">2021-12-22 23:37</td><td><span class="ops"><i style="width:26px"><svg style="margin-left:-5.0px;margin-top:-5.0px" width="10" height="10" viewBox="0 0 10 10"><path d="M5 0.4 V9.6 M0.4 5 H9.6" stroke="#444" stroke-width="2.2"/></svg></i><i style="width:27px"><svg style="margin-left:-5.5px;margin-top:-4.0px" width="11" height="9" viewBox="0 0 11 9"><path d="M0 1 H11 M0 4.5 H11 M0 8 H11" stroke="#444" stroke-width="1.7"/></svg></i><i style="width:21px"><svg style="margin-left:-5.5px;margin-top:-5.0px" width="11" height="11" viewBox="0 0 11 11"><path d="M7.6 0.6 L10.4 3.4 L9.2 4.6 L6.4 1.8 Z M5.7 2.5 L8.5 5.3 L3.4 10.4 L0.4 10.6 L0.6 7.6 Z M1.5 8.2 L1.4 9.6 L2.8 9.5 Z" fill="#444" fill-rule="evenodd"/></svg></i><i style="width:23px"><svg style="margin-left:-6.5px;margin-top:-4.5px" width="13" height="9" viewBox="0 0 13 9"><path d="M0 3.4 H7.2 L5.6 1.2 L6.9 0 L12.6 4.5 L6.9 9 L5.6 7.8 L7.2 5.6 H0 Z" fill="#444"/></svg></i><i style="width:19px"><svg style="margin-left:-4.5px;margin-top:-4.0px" width="9" height="9" viewBox="0 0 9 9"><path d="M1.2 1.2 L7.8 7.8 M7.8 1.2 L1.2 7.8" stroke="#444" stroke-width="2.4"/></svg></i></span></td></tr>
<tr><td class="c0"><span class="cb"></span></td><td class="n">809</td><td class="n">800</td><td class="a1">ceshi01</td><td class="jb">jb415472</td><td><a class="ed n">8</a></td><td><a class="ed n">普通成员</a></td><td class="n">0</td><td class="ip">218.109.197.191</td><td><span class="lb">正常返佣</span></td><td><span class="lb">正常账号</span></td><td><span class="lb">正常登录</span></td><td class="dt">2021-12-22 23:37</td><td><span class="ops"><i style="width:26px"><svg style="margin-left:-5.0px;margin-top:-5.0px" width="10" height="10" viewBox="0 0 10 10"><path d="M5 0.4 V9.6 M0.4 5 H9.6" stroke="#444" stroke-width="2.2"/></svg></i><i style="width:27px"><svg style="margin-left:-5.5px;margin-top:-4.0px" width="11" height="9" viewBox="0 0 11 9"><path d="M0 1 H11 M0 4.5 H11 M0 8 H11" stroke="#444" stroke-width="1.7"/></svg></i><i style="width:21px"><svg style="margin-left:-5.5px;margin-top:-5.0px" width="11" height="11" viewBox="0 0 11 11"><path d="M7.6 0.6 L10.4 3.4 L9.2 4.6 L6.4 1.8 Z M5.7 2.5 L8.5 5.3 L3.4 10.4 L0.4 10.6 L0.6 7.6 Z M1.5 8.2 L1.4 9.6 L2.8 9.5 Z" fill="#444" fill-rule="evenodd"/></svg></i><i style="width:23px"><svg style="margin-left:-6.5px;margin-top:-4.5px" width="13" height="9" viewBox="0 0 13 9"><path d="M0 3.4 H7.2 L5.6 1.2 L6.9 0 L12.6 4.5 L6.9 9 L5.6 7.8 L7.2 5.6 H0 Z" fill="#444"/></svg></i><i style="width:19px"><svg style="margin-left:-4.5px;margin-top:-4.0px" width="9" height="9" viewBox="0 0 9 9"><path d="M1.2 1.2 L7.8 7.8 M7.8 1.2 L1.2 7.8" stroke="#444" stroke-width="2.4"/></svg></i></span></td></tr>
<tr><td class="c0"><span class="cb"></span></td><td class="n">810</td><td class="n">800</td><td class="a1">ceshi01</td><td class="jb">jb455595</td><td><a class="ed n">9</a></td><td><a class="ed n">普通成员</a></td><td class="n">0</td><td class="ip2">36.17.171.220</td><td><span class="lb">正常返佣</span></td><td><span class="lb">正常账号</span></td><td><span class="lb">正常登录</span></td><td class="dt">2021-12-22 23:38</td><td><span class="ops"><i style="width:26px"><svg style="margin-left:-5.0px;margin-top:-5.0px" width="10" height="10" viewBox="0 0 10 10"><path d="M5 0.4 V9.6 M0.4 5 H9.6" stroke="#444" stroke-width="2.2"/></svg></i><i style="width:27px"><svg style="margin-left:-5.5px;margin-top:-4.0px" width="11" height="9" viewBox="0 0 11 9"><path d="M0 1 H11 M0 4.5 H11 M0 8 H11" stroke="#444" stroke-width="1.7"/></svg></i><i style="width:21px"><svg style="margin-left:-5.5px;margin-top:-5.0px" width="11" height="11" viewBox="0 0 11 11"><path d="M7.6 0.6 L10.4 3.4 L9.2 4.6 L6.4 1.8 Z M5.7 2.5 L8.5 5.3 L3.4 10.4 L0.4 10.6 L0.6 7.6 Z M1.5 8.2 L1.4 9.6 L2.8 9.5 Z" fill="#444" fill-rule="evenodd"/></svg></i><i style="width:23px"><svg style="margin-left:-6.5px;margin-top:-4.5px" width="13" height="9" viewBox="0 0 13 9"><path d="M0 3.4 H7.2 L5.6 1.2 L6.9 0 L12.6 4.5 L6.9 9 L5.6 7.8 L7.2 5.6 H0 Z" fill="#444"/></svg></i><i style="width:19px"><svg style="margin-left:-4.5px;margin-top:-4.0px" width="9" height="9" viewBox="0 0 9 9"><path d="M1.2 1.2 L7.8 7.8 M7.8 1.2 L1.2 7.8" stroke="#444" stroke-width="2.4"/></svg></i></span></td></tr>
<tr><td class="c0"><span class="cb"></span></td><td class="n">811</td><td class="n">800</td><td class="a1">ceshi01</td><td class="jb">jb120565</td><td><a class="ed n">10</a></td><td><a class="ed n">普通成员</a></td><td class="n">0</td><td class="ip2">36.17.171.220</td><td><span class="lb">正常返佣</span></td><td><span class="lb">正常账号</span></td><td><span class="lb">正常登录</span></td><td class="dt">2021-12-22 23:38</td><td><span class="ops"><i style="width:26px"><svg style="margin-left:-5.0px;margin-top:-5.0px" width="10" height="10" viewBox="0 0 10 10"><path d="M5 0.4 V9.6 M0.4 5 H9.6" stroke="#444" stroke-width="2.2"/></svg></i><i style="width:27px"><svg style="margin-left:-5.5px;margin-top:-4.0px" width="11" height="9" viewBox="0 0 11 9"><path d="M0 1 H11 M0 4.5 H11 M0 8 H11" stroke="#444" stroke-width="1.7"/></svg></i><i style="width:21px"><svg style="margin-left:-5.5px;margin-top:-5.0px" width="11" height="11" viewBox="0 0 11 11"><path d="M7.6 0.6 L10.4 3.4 L9.2 4.6 L6.4 1.8 Z M5.7 2.5 L8.5 5.3 L3.4 10.4 L0.4 10.6 L0.6 7.6 Z M1.5 8.2 L1.4 9.6 L2.8 9.5 Z" fill="#444" fill-rule="evenodd"/></svg></i><i style="width:23px"><svg style="margin-left:-6.5px;margin-top:-4.5px" width="13" height="9" viewBox="0 0 13 9"><path d="M0 3.4 H7.2 L5.6 1.2 L6.9 0 L12.6 4.5 L6.9 9 L5.6 7.8 L7.2 5.6 H0 Z" fill="#444"/></svg></i><i style="width:19px"><svg style="margin-left:-4.5px;margin-top:-4.0px" width="9" height="9" viewBox="0 0 9 9"><path d="M1.2 1.2 L7.8 7.8 M7.8 1.2 L1.2 7.8" stroke="#444" stroke-width="2.4"/></svg></i></span></td></tr>
<tr><td class="c0"><span class="cb"></span></td><td class="n">812</td><td class="n">800</td><td class="a1">ceshi01</td><td class="jb">jb460942</td><td><a class="ed n">11</a></td><td><a class="ed n">普通成员</a></td><td class="n">0</td><td class="ip2">36.17.171.220</td><td><span class="lb">正常返佣</span></td><td><span class="lb">正常账号</span></td><td><span class="lb">正常登录</span></td><td class="dt">2021-12-22 23:38</td><td><span class="ops"><i style="width:26px"><svg style="margin-left:-5.0px;margin-top:-5.0px" width="10" height="10" viewBox="0 0 10 10"><path d="M5 0.4 V9.6 M0.4 5 H9.6" stroke="#444" stroke-width="2.2"/></svg></i><i style="width:27px"><svg style="margin-left:-5.5px;margin-top:-4.0px" width="11" height="9" viewBox="0 0 11 9"><path d="M0 1 H11 M0 4.5 H11 M0 8 H11" stroke="#444" stroke-width="1.7"/></svg></i><i style="width:21px"><svg style="margin-left:-5.5px;margin-top:-5.0px" width="11" height="11" viewBox="0 0 11 11"><path d="M7.6 0.6 L10.4 3.4 L9.2 4.6 L6.4 1.8 Z M5.7 2.5 L8.5 5.3 L3.4 10.4 L0.4 10.6 L0.6 7.6 Z M1.5 8.2 L1.4 9.6 L2.8 9.5 Z" fill="#444" fill-rule="evenodd"/></svg></i><i style="width:23px"><svg style="margin-left:-6.5px;margin-top:-4.5px" width="13" height="9" viewBox="0 0 13 9"><path d="M0 3.4 H7.2 L5.6 1.2 L6.9 0 L12.6 4.5 L6.9 9 L5.6 7.8 L7.2 5.6 H0 Z" fill="#444"/></svg></i><i style="width:19px"><svg style="margin-left:-4.5px;margin-top:-4.0px" width="9" height="9" viewBox="0 0 9 9"><path d="M1.2 1.2 L7.8 7.8 M7.8 1.2 L1.2 7.8" stroke="#444" stroke-width="2.4"/></svg></i></span></td></tr>
</tbody></table>
<div class="wm" style="left:264.0px;top:176.6px">玖福源码</div>
<div class="wm" style="left:896.7px;top:176.6px">玖福源码</div>
<div class="wm" style="left:1529.3px;top:176.6px">玖福源码</div>
<div class="wm" style="left:264.0px;top:488.6px">玖福源码</div>
<div class="wm" style="left:896.7px;top:488.6px">玖福源码</div>
<div class="wm" style="left:1529.3px;top:488.6px">玖福源码</div>
<div class="wm" style="left:264.0px;top:800.6px">玖福源码</div>
<div class="wm" style="left:896.7px;top:800.6px">玖福源码</div>
<div class="wm" style="left:1529.3px;top:800.6px">玖福源码</div>
<div id="topline" class="abs"></div>
</body>
</html>
